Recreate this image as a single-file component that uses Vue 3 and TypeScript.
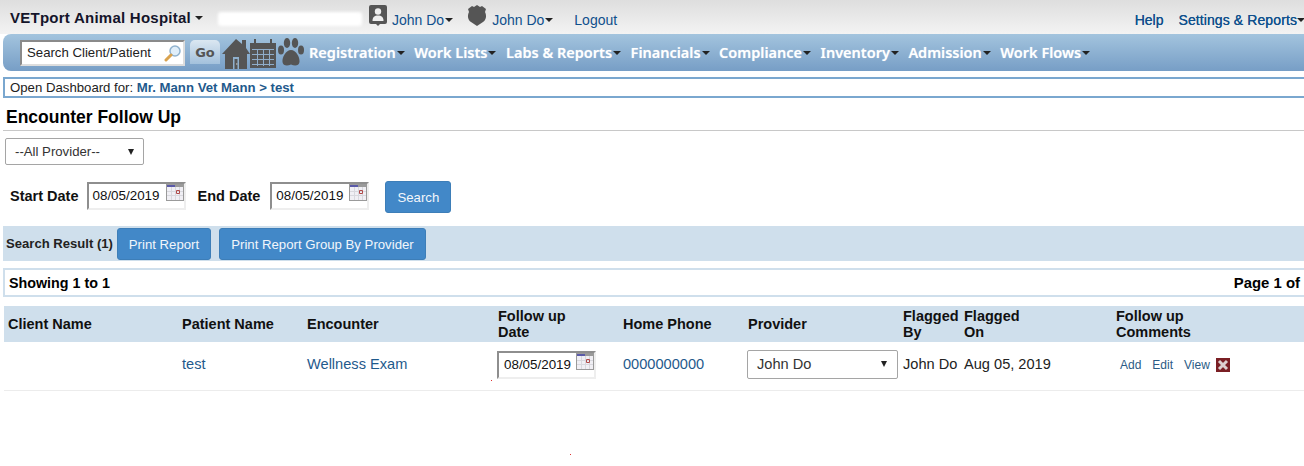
<script setup lang="ts">
const menus: string[] = ['Registration', 'Work Lists', 'Labs & Reports', 'Financials', 'Compliance', 'Inventory', 'Admission', 'Work Flows']
</script>

<template>
  <div class="page">
    <header class="top">
      <div class="hospital">VETport Animal Hospital<i class="caret dark small-gap"></i></div>
      <div class="redact"></div>
      <svg class="ic-user" viewBox="0 0 18 21" width="18" height="21"><path fill="#555" d="M2 0h14a2 2 0 0 1 2 2v15a2 2 0 0 1-2 2h-5l-2 2-2-2H2a2 2 0 0 1-2-2V2a2 2 0 0 1 2-2z"/><circle cx="9" cy="6.5" r="3.2" fill="#eee"/><path fill="#eee" d="M3.5 16c0-4 2-5.500 5.500-5.500s5.500 1.500 5.500 5.500z"/></svg>
      <a class="toplink user1">John Do<i class="caret dark"></i></a>
      <svg class="ic-shield" viewBox="0 0 20 21" width="20" height="21"><path fill="#555" d="M10 0l3 2 2-1 4 3-1 3c2 4 1 8-2 10l-6 4-6-4C1 15 0 11 2 7L1 4l4-3 2 1z"/></svg>
      <a class="toplink user2">John Do<i class="caret dark"></i></a>
      <a class="toplink logout">Logout</a>
      <span class="spacer"></span>
      <a class="toplink bold help">Help</a>
      <a class="toplink bold settings">Settings &amp; Reports<i class="caret dark"></i></a>
    </header>

    <nav class="nav">
      <div class="searchbox">
        <span>Search Client/Patient</span>
        <svg viewBox="0 0 18 18" width="18" height="18"><circle cx="11" cy="7" r="5" fill="#dfeefa" stroke="#8fb2cf" stroke-width="1.500"/><path d="M7 11l-5 5" stroke="#d9a24e" stroke-width="3" stroke-linecap="round"/></svg>
      </div>
      <button class="go">Go</button>
      <svg class="ic-home" viewBox="0 0 28 30" width="28" height="30"><path fill="#555" d="M14 0l6 5V1h4v8l4 6h-3v15H3V15H0z"/><path fill="#8fb0cd" d="M11 18h6v12h-6z"/><path fill="#555" d="M12.500 20h3v10h-3z"/><circle cx="14.800" cy="25" r=".7" fill="#ccc"/></svg>
      <svg class="ic-cal" viewBox="0 0 26 29" width="26" height="29"><path fill="#555" d="M0 4h4V0h2v4h14V0h2v4h4v25H0z"/><path fill="#8fadca" d="M2 10h22v1H2zM2 15h22v1H2zM2 20h22v1H2zM2 25h22v1H2zM7 10h1v17H7zM13 10h1v17h-1zM19 10h1v17h-1z"/></svg>
      <svg class="ic-paw" viewBox="0 0 26 29" width="26" height="29"><g fill="#555"><ellipse cx="3" cy="12" rx="3" ry="4.500"/><ellipse cx="9" cy="5" rx="3.200" ry="5"/><ellipse cx="17" cy="5" rx="3.200" ry="5"/><ellipse cx="23" cy="12" rx="3" ry="4.500"/><path d="M13 12c5 0 9 7 8.500 12-.4 4-5 4-8.500 2.500C9.500 28 4.900 28 4.500 24 4 19 8 12 13 12z"/></g></svg>
      <div class="menu">
        <a v-for="m in menus" :key="m" class="menu-item">{{ m }}<i class="caret dark"></i></a>
      </div>
    </nav>

    <div class="crumb">Open Dashboard for: <a>Mr. Mann Vet Mann &gt; test</a></div>

    <h1 class="title">Encounter Follow Up</h1>

    <div class="select provider-filter"><span>--All Provider--</span><i class="tri"></i></div>

    <div class="dates">
      <b>Start Date</b>
      <div class="date first"><span>08/05/2019</span><svg class="cal" viewBox="0 0 18 17" width="18" height="17"><use href="#mini-cal" /></svg></div>
      <b class="end">End Date</b>
      <div class="date second"><span>08/05/2019</span><svg class="cal" viewBox="0 0 18 17" width="18" height="17"><use href="#mini-cal" /></svg></div>
      <button class="btn search">Search</button>
    </div>

    <div class="band">
      <b>Search Result (1)</b>
      <button class="btn">Print Report</button>
      <button class="btn group">Print Report Group By Provider</button>
    </div>

    <div class="showing"><b>Showing 1 to 1</b><b class="pageof">Page 1 of</b></div>

    <div class="grid head">
      <div>Client Name</div>
      <div>Patient Name</div>
      <div>Encounter</div>
      <div>Follow up<br />Date</div>
      <div>Home Phone</div>
      <div>Provider</div>
      <div>Flagged<br />By</div>
      <div>Flagged<br />On</div>
      <div>Follow up<br />Comments</div>
    </div>
    <div class="grid row">
      <div></div>
      <div><a>test</a></div>
      <div><a>Wellness Exam</a></div>
      <div><div class="date"><span>08/05/2019</span><svg class="cal" viewBox="0 0 18 17" width="18" height="17"><use href="#mini-cal" /></svg></div></div>
      <div><a>0000000000</a></div>
      <div><div class="select prov"><span>John Do</span><i class="tri"></i></div></div>
      <div>John Do</div>
      <div>Aug 05, 2019</div>
      <div class="actions">
        <a>Add</a><a>Edit</a><a>View</a>
        <svg viewBox="0 0 14 14" width="14" height="14"><path fill="#7a1f24" d="M0 0h14v14H0z"/><path stroke="#ddd0d0" stroke-width="3" d="M3 3l8 8M11 3l-8 8"/></svg>
      </div>
    </div>

    <svg class="defs" width="0" height="0">
      <symbol id="mini-cal" viewBox="0 0 18 17">
        <path fill="#9a9a9a" d="M0 0h18v17H0z"/>
        <path fill="#f0eff4" d="M1 3h16v13H1z"/>
        <path fill="#5a5aa8" d="M1 1h8v2H1z"/>
        <path fill="#d8d8de" d="M1 7h16v1H1zM1 11h16v1H1zM5 3h1v13H5zM9 3h1v13H9zM13 3h1v13h-1z"/>
        <path fill="none" stroke="#b04a4a" d="M10.500 6.500h3v3h-3z"/>
      </symbol>
    </svg>
    <i class="dot d1"></i>
    <i class="dot d2"></i>
  </div>
</template>

<style>
html, body { margin: 0; background: #fff; overflow: hidden; }
</style>

<style scoped>
.page { position: relative; width: 1304px; height: 466px; overflow: hidden; font-family: "Liberation Sans", Arial, sans-serif; font-size: 14px; color: #111; }
a { color: #1f5a8c; cursor: pointer; }
.defs { position: absolute; }

.top { height: 34px; display: flex; align-items: center; background: linear-gradient(#dedede, #f3f3f3); color: #0b4f86; }
.hospital { margin-left: 10px; font-size: 15px; font-weight: bold; color: #14142a; letter-spacing: .25px; white-space: nowrap; width: 208px; margin-top: 1px; }
.redact { width: 144px; height: 14px; background: #fff; border-radius: 3px; margin-top: 4px; filter: blur(1.500px); }
.ic-user { margin-left: 7px; margin-top: -3px; }
.toplink { color: #10508c; font-size: 14px; white-space: nowrap; margin-top: 6px; line-height: 15px; }
.bold { text-shadow: 0 0 .3px #10508c; }
.user1 { margin-left: 5px; }
.ic-shield { margin-left: 14px; margin-top: -3px; }
.user2 { margin-left: 5px; }
.logout { margin-left: 21px; }
.spacer { flex: 1; }
.settings { margin-left: 15px; letter-spacing: .1px; }
.caret { display: inline-block; width: 0; height: 0; border-left: 4.500px solid transparent; border-right: 4.500px solid transparent; vertical-align: 3px; margin-left: 1px; }
.caret.dark { border-top: 4.500px solid #222; }
.small-gap { margin-left: 4px; }
.settings .caret { margin-left: 0; margin-right: -1px; }

.nav { margin-left: 3px; height: 37px; display: flex; align-items: center; background: linear-gradient(#a3c4de, #779ec6); border-radius: 8px 0 0 8px; }
.searchbox { margin-left: 17px; width: 165px; height: 26px; box-sizing: border-box; border: 2px solid #8a8a8a; border-right-color: #ddd; border-bottom-color: #ddd; background: #fff; display: flex; align-items: center; justify-content: space-between; padding: 0 1px 0 5px; font-size: 13.200px; color: #222; }
.go { margin-left: 5px; width: 30px; height: 24px; padding: 0; border: none; border-radius: 5px 5px 0 0; background: linear-gradient(#dbe7f1, #a3c1dc); color: #555; font: bold 13px "DejaVu Sans", sans-serif; margin-top: -1px; }
.ic-home { margin-left: 2px; margin-top: 2px; }
.ic-cal { margin-left: 0; margin-top: 1px; }
.ic-paw { margin-left: 2px; margin-top: 0; }
.menu { display: flex; margin-left: 5px; gap: 9.500px; margin-top: -2px; }
.menu-item { color: #fff; font-family: "Noto Sans", sans-serif; font-weight: 600; font-size: 14.500px; white-space: nowrap; text-shadow: 0 0 1px rgba(255,255,255,.5); }

.crumb { margin: 6px 0 0 3px; height: 21px; box-sizing: border-box; border: 2px solid #7aa7cf; border-right: none; padding-left: 5px; font-size: 13.200px; line-height: 17px; color: #222; }
.crumb a { font-weight: bold; color: #1f5a8c; }

.title { margin: 9px 0 0 5px; padding-bottom: 3px; border-bottom: 1px solid #c8c8c8; font-size: 17.500px; line-height: 20px; font-weight: bold; color: #000; margin-left: 3px; padding-left: 3px; }

.select { box-sizing: border-box; border: 1px solid #a5a5a5; border-radius: 2px; background: #fff; display: flex; align-items: center; justify-content: space-between; color: #333; }
.provider-filter { margin: 7px 0 0 5px; width: 139px; height: 27px; padding: 0 9px 0 9px; font-size: 13.200px; }
.tri { width: 0; height: 0; border-left: 3px solid transparent; border-right: 3px solid transparent; border-top: 6px solid #222; }

.dates { margin: 15px 0 0 10px; display: flex; align-items: center; height: 32px; }
.dates b { font-size: 14.500px; color: #111; }
.dates .end { margin-left: 12px; }
.date { position: relative; box-sizing: border-box; width: 99px; height: 28px; border: 2px solid #8e8e8e; border-right-color: #eee; border-bottom-color: #eee; background: #fff; font-size: 13.400px; line-height: 24px; padding-left: 4px; color: #111; }
.dates .first { margin-left: 8px; }
.dates .second { margin-left: 10px; }
.cal { position: absolute; top: 0; right: 0; }
.btn { height: 32px; box-sizing: border-box; padding: 0 12px; border: 1px solid #3d7eb8; border-radius: 3px; background: #4288c8; color: #f2f6fb; font: 13.200px "Liberation Sans", Arial, sans-serif; }
.search { margin: 2px 0 0 16px; width: 66px; padding: 0; }

.band { margin: 14px 0 0 3px; height: 35px; background: #cfdfec; display: flex; align-items: center; padding-left: 3px; }
.band b { font-size: 13.100px; color: #222; }
.band .btn { margin-left: 4px; width: 94px; padding: 0; margin-top: 1px; }
.band .group { margin-left: 8px; width: 207px; }

.showing { margin: 7px 0 0 3px; height: 29px; box-sizing: border-box; border: 2px solid #cfdfec; border-right: none; display: flex; align-items: center; justify-content: space-between; padding: 0 4px 0 4px; font-size: 14.300px; color: #000; }
.pageof { font-size: 14.900px; }

.grid { display: grid; grid-template-columns: 174px 125px 191px 125px 125px 155px 61px 152px 1fr; margin-left: 4px; align-items: center; }
.grid > div { padding-left: 4px; }
.head { margin-top: 9px; height: 36px; background: #cfdfec; font-weight: bold; font-size: 14.500px; line-height: 16px; color: #111; }
.row { height: 49px; box-sizing: border-box; padding-bottom: 4px; border-bottom: 1px solid #ececec; font-size: 14.600px; color: #222; }
.row a { color: #1f5a8c; }
.row .date { margin: 2px 0 0 -1px; padding-left: 5px; }
.prov { width: 151px; height: 29px; margin-left: -1px; padding: 0 10px 0 9px; font-size: 14.600px; }
.actions { display: flex; align-items: center; font-size: 12px; padding-left: 8px !important; margin-top: 1px; }
.actions a { color: #2b5b85; margin-right: 11px; }
.actions svg { margin-left: -5px; }

.dot { position: absolute; width: 1px; height: 1px; background: #d33; }
.d1 { left: 491px; top: 380px; }
.d2 { left: 570px; top: 454px; }
</style>
